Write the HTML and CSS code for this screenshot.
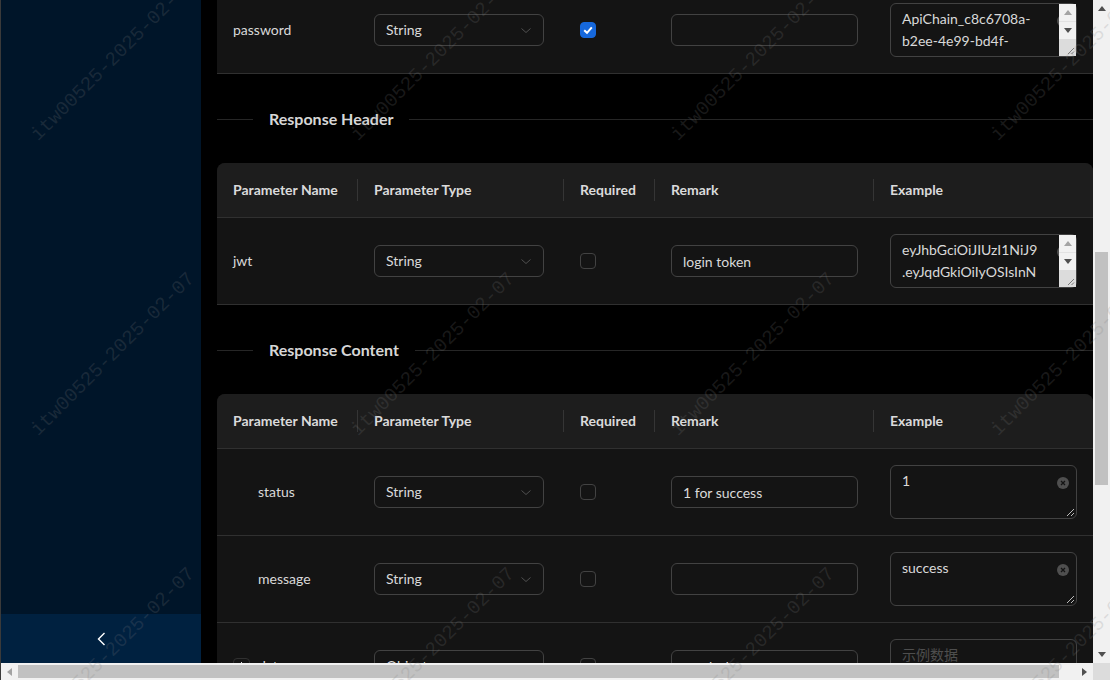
FILE: index.html
```html
<!DOCTYPE html>
<html lang="en">
<head>
<meta charset="utf-8">
<title>API Document</title>
<link rel="stylesheet" href="styles.css">
</head>
<body>
<div class="window">
  <div class="viewport">
    <aside class="sider">
      <div class="sider-menu"></div>
      <div class="sider-trigger">
        <svg width="10" height="14" viewBox="0 0 10 14"><path d="M8.5 1 L2.5 7 L8.5 13" fill="none" stroke="#fff" stroke-width="1.4"/></svg>
      </div>
    </aside>
    <main class="content">
      <div class="scroller">
        <section class="table-card">
          <div class="trow">
            <div class="td">password</div>
            <div class="td"><div class="select"><span>String</span><svg class="arrow" width="12" height="12" viewBox="0 0 12 12"><path d="M1.5 4.5 L6 8.5 L10.5 4.5" fill="none" stroke="currentColor" stroke-width="1"/></svg></div></div>
            <div class="td"><span class="checkbox checked"><svg width="12" height="12" viewBox="0 0 12 12"><path d="M2.2 6.2 L5 8.8 L9.8 3.4" fill="none" stroke="#fff" stroke-width="2"/></svg></span></div>
            <div class="td"><input class="input" type="text" value=""></div>
            <div class="td"><span class="ta-wrap"><span class="ta-clear"><svg width="12" height="12" viewBox="0 0 12 12"><circle cx="6" cy="6" r="6" fill="rgba(255,255,255,0.25)"/><path d="M4 4 L8 8 M8 4 L4 8" stroke="#141414" stroke-width="1.3"/></svg></span><textarea class="ta ta-scroll">ApiChain_c8c6708a-b2ee-4e99-bd4f-5e3a1c9d7f20</textarea><span class="ta-bar" aria-hidden="true"><span class="ta-bar-btn"><svg width="8" height="5" viewBox="0 0 8 5"><path d="M0 5 H8 L4 0 Z" fill="#a3a3a3"/></svg></span><span class="ta-bar-track"></span><span class="ta-bar-btn"><svg width="8" height="5" viewBox="0 0 8 5"><path d="M0 0 H8 L4 5 Z" fill="#505050"/></svg></span><span class="ta-bar-corner"><svg width="17" height="17" viewBox="0 0 17 17"><path d="M15 9 L9 15 M15 12.5 L12.5 15" stroke="#7a7a7a" stroke-width="1"/></svg></span></span></span></div>
          </div>
        </section>

        <div class="divider"><span class="divider-text">Response Header</span></div>

        <section class="table-card">
          <div class="thead">
            <div class="th">Parameter Name</div>
            <div class="th">Parameter Type</div>
            <div class="th">Required</div>
            <div class="th">Remark</div>
            <div class="th">Example</div>
          </div>
          <div class="trow">
            <div class="td">jwt</div>
            <div class="td"><div class="select"><span>String</span><svg class="arrow" width="12" height="12" viewBox="0 0 12 12"><path d="M1.5 4.5 L6 8.5 L10.5 4.5" fill="none" stroke="currentColor" stroke-width="1"/></svg></div></div>
            <div class="td"><span class="checkbox"></span></div>
            <div class="td"><input class="input" type="text" value="login token"></div>
            <div class="td"><span class="ta-wrap"><span class="ta-clear"><svg width="12" height="12" viewBox="0 0 12 12"><circle cx="6" cy="6" r="6" fill="rgba(255,255,255,0.25)"/><path d="M4 4 L8 8 M8 4 L4 8" stroke="#141414" stroke-width="1.3"/></svg></span><textarea class="ta ta-scroll">eyJhbGciOiJIUzI1NiJ9.eyJqdGkiOiIyOSIsInN1YiI6ImFkbWluIiwiaWF0IjoxNzM4ODk2MDAwfQ.x7QmZ2h4pLkR9sVtYbNwA3cE8fGjU1oI6dHqT0rMeKs</textarea><span class="ta-bar" aria-hidden="true"><span class="ta-bar-btn"><svg width="8" height="5" viewBox="0 0 8 5"><path d="M0 5 H8 L4 0 Z" fill="#a3a3a3"/></svg></span><span class="ta-bar-track"></span><span class="ta-bar-btn"><svg width="8" height="5" viewBox="0 0 8 5"><path d="M0 0 H8 L4 5 Z" fill="#505050"/></svg></span><span class="ta-bar-corner"><svg width="17" height="17" viewBox="0 0 17 17"><path d="M15 9 L9 15 M15 12.5 L12.5 15" stroke="#7a7a7a" stroke-width="1"/></svg></span></span></span></div>
          </div>
        </section>

        <div class="divider"><span class="divider-text">Response Content</span></div>

        <section class="table-card">
          <div class="thead">
            <div class="th">Parameter Name</div>
            <div class="th">Parameter Type</div>
            <div class="th">Required</div>
            <div class="th">Remark</div>
            <div class="th">Example</div>
          </div>
          <div class="trow">
            <div class="td"><span class="indent"></span>status</div>
            <div class="td"><div class="select"><span>String</span><svg class="arrow" width="12" height="12" viewBox="0 0 12 12"><path d="M1.5 4.5 L6 8.5 L10.5 4.5" fill="none" stroke="currentColor" stroke-width="1"/></svg></div></div>
            <div class="td"><span class="checkbox"></span></div>
            <div class="td"><input class="input" type="text" value="1 for success"></div>
            <div class="td"><span class="ta-wrap"><span class="ta-clear"><svg width="12" height="12" viewBox="0 0 12 12"><circle cx="6" cy="6" r="6" fill="rgba(255,255,255,0.25)"/><path d="M4 4 L8 8 M8 4 L4 8" stroke="#141414" stroke-width="1.3"/></svg></span><textarea class="ta">1</textarea></span></div>
          </div>
          <div class="trow">
            <div class="td"><span class="indent"></span>message</div>
            <div class="td"><div class="select"><span>String</span><svg class="arrow" width="12" height="12" viewBox="0 0 12 12"><path d="M1.5 4.5 L6 8.5 L10.5 4.5" fill="none" stroke="currentColor" stroke-width="1"/></svg></div></div>
            <div class="td"><span class="checkbox"></span></div>
            <div class="td"><input class="input" type="text" value=""></div>
            <div class="td"><span class="ta-wrap"><span class="ta-clear"><svg width="12" height="12" viewBox="0 0 12 12"><circle cx="6" cy="6" r="6" fill="rgba(255,255,255,0.25)"/><path d="M4 4 L8 8 M8 4 L4 8" stroke="#141414" stroke-width="1.3"/></svg></span><textarea class="ta">success</textarea></span></div>
          </div>
          <div class="trow">
            <div class="td"><button class="expand" type="button" aria-label="expand"></button>data</div>
            <div class="td"><div class="select"><span>Object</span><svg class="arrow" width="12" height="12" viewBox="0 0 12 12"><path d="M1.5 4.5 L6 8.5 L10.5 4.5" fill="none" stroke="currentColor" stroke-width="1"/></svg></div></div>
            <div class="td"><span class="checkbox"></span></div>
            <div class="td"><input class="input" type="text" value="result data"></div>
            <div class="td"><span class="ta-wrap"><textarea class="ta" placeholder="示例数据"></textarea></span></div>
          </div>
        </section>
      </div>
    </main>
  </div>

  <div class="vscroll">
    <div class="sb-btn"><svg width="8" height="5" viewBox="0 0 8 5"><path d="M0 5 H8 L4 0 Z" fill="#505050"/></svg></div>
    <div class="vtrack"><div class="vthumb"></div></div>
    <div class="sb-btn"><svg width="8" height="5" viewBox="0 0 8 5"><path d="M0 0 H8 L4 5 Z" fill="#505050"/></svg></div>
  </div>
  <div class="hscroll">
    <div class="sb-btn"><svg width="5" height="8" viewBox="0 0 5 8"><path d="M5 0 V8 L0 4 Z" fill="#a3a3a3"/></svg></div>
    <div class="htrack"><div class="hthumb"></div></div>
    <div class="sb-btn"><svg width="5" height="8" viewBox="0 0 5 8"><path d="M0 0 V8 L5 4 Z" fill="#505050"/></svg></div>
  </div>
  <div class="corner"></div>

  <div class="watermark" aria-hidden="true">
    <div class="wm"><span>itw00525-2025-02-07</span></div>
    <div class="wm"><span>itw00525-2025-02-07</span></div>
    <div class="wm"><span>itw00525-2025-02-07</span></div>
    <div class="wm"><span>itw00525-2025-02-07</span></div>
    <div class="wm"><span>itw00525-2025-02-07</span></div>
    <div class="wm"><span>itw00525-2025-02-07</span></div>
    <div class="wm"><span>itw00525-2025-02-07</span></div>
    <div class="wm"><span>itw00525-2025-02-07</span></div>
    <div class="wm"><span>itw00525-2025-02-07</span></div>
    <div class="wm"><span>itw00525-2025-02-07</span></div>
    <div class="wm"><span>itw00525-2025-02-07</span></div>
    <div class="wm"><span>itw00525-2025-02-07</span></div>
  </div>
</div>
</body>
</html>
```

FILE: styles.css
```css
* { box-sizing: border-box; }
html, body { margin: 0; padding: 0; background: #000; }
body {
  font-family: Lato, "Noto Sans CJK SC", sans-serif;
  font-size: 14px;
  line-height: 22px;
  color: rgba(255, 255, 255, 0.85);
  overflow: hidden;
}

.window {
  position: relative;
  width: 1110px;
  height: 680px;
  overflow: hidden;
  display: grid;
  grid-template-columns: 1092px 17px;
  grid-template-rows: 663px 17px;
  border-left: 1px solid #3a3a3a;
}

.viewport { display: flex; min-width: 0; overflow: hidden; }

.sider {
  width: 200px;
  flex: none;
  background: #001529;
  display: flex;
  flex-direction: column;
}
.sider-menu { flex: 1; }
.sider-trigger {
  height: 49px;
  background: #002140;
  display: flex;
  align-items: center;
  justify-content: center;
}

.content {
  flex: 1;
  min-width: 0;
  background: #000;
  padding-left: 16px;
  overflow: hidden;
}
.scroller { margin-top: -13px; }

.table-card { background: #141414; border-radius: 8px 8px 0 0; }
.thead, .trow {
  display: grid;
  grid-template-columns: 141px 206px 91px 219px 219px;
}
.thead {
  background: #1d1d1d;
  border-radius: 8px 8px 0 0;
  border-bottom: 1px solid #303030;
}
.th {
  position: relative;
  padding: 16px;
  font-weight: 700;
  line-height: 22px;
  white-space: nowrap;
}
.th:not(:last-child)::before {
  content: "";
  position: absolute;
  right: 0;
  top: 16px;
  width: 1px;
  height: 22px;
  background: #353535;
}
.trow { border-bottom: 1px solid #303030; }
.td {
  padding: 16px;
  display: flex;
  align-items: center;
  min-width: 0;
}

.indent { display: inline-block; width: 17px; height: 17px; margin-right: 8px; flex: none; }
.expand {
  flex: none;
  width: 17px;
  height: 17px;
  margin: 0 8px 0 0;
  padding: 0;
  border: 1px solid #303030;
  border-radius: 4px;
  background: #141414;
  position: relative;
}
.expand::before, .expand::after {
  content: "";
  position: absolute;
  background: rgba(255, 255, 255, 0.85);
}
.expand::before { left: 3px; right: 3px; top: 7px; height: 1px; }
.expand::after { top: 3px; bottom: 3px; left: 7px; width: 1px; }

.select {
  width: 170px;
  height: 32px;
  border: 1px solid #424242;
  border-radius: 6px;
  padding: 0 11px;
  display: flex;
  align-items: center;
  justify-content: space-between;
}
.select .arrow { color: rgba(255, 255, 255, 0.25); }

.checkbox {
  width: 16px;
  height: 16px;
  border: 1px solid #424242;
  border-radius: 4px;
  display: flex;
  align-items: center;
  justify-content: center;
}
.checkbox.checked { background: #1668dc; border-color: #1668dc; }

.input {
  width: 100%;
  height: 32px;
  border: 1px solid #424242;
  border-radius: 6px;
  padding: 4px 11px;
  background: transparent;
  color: rgba(255, 255, 255, 0.85);
  font: 14px/22px Lato, "Noto Sans CJK SC", sans-serif;
  outline: none;
}

.ta-wrap { position: relative; display: block; width: 100%; height: 54px; }
.ta-clear {
  position: absolute;
  top: 12px;
  right: 8px;
  width: 12px;
  height: 12px;
  display: block;
}
.ta-clear svg { display: block; }
.ta {
  position: relative;
  display: block;
  width: 100%;
  height: 54px;
  margin: 0;
  border: 1px solid #424242;
  border-radius: 6px;
  padding: 4px 24px 4px 11px;
  background: transparent;
  color: rgba(255, 255, 255, 0.85);
  font: 14px/22px Lato, "Noto Sans CJK SC", sans-serif;
  resize: vertical;
  outline: none;
  overflow: hidden;
}
.ta::placeholder { color: rgba(255, 255, 255, 0.25); }
.ta::-webkit-resizer {
  background: transparent url("data:image/svg+xml,%3Csvg xmlns='http://www.w3.org/2000/svg' width='17' height='17'%3E%3Cpath d='M15 8 L8 15 M15 12 L12 15' stroke='%23bbbbbb' stroke-width='1'/%3E%3C/svg%3E") no-repeat right bottom;
}
.ta-scroll { padding-right: 37px; resize: none; }

.ta-bar {
  position: absolute;
  top: 1px;
  right: 1px;
  bottom: 1px;
  width: 17px;
  display: flex;
  flex-direction: column;
  background: #f1f1f1;
}
.ta-bar-btn {
  flex: none;
  height: 17px;
  display: flex;
  align-items: center;
  justify-content: center;
}
.ta-bar-btn svg, .ta-bar-corner svg { display: block; }
.ta-bar-track { flex: 1; background: #e2e2e2; }
.ta-bar-corner { flex: none; height: 17px; background: #dcdcdc; }

.divider {
  display: flex;
  align-items: center;
  height: 42px;
  margin: 24px 0 23px;
  font-size: 16px;
  font-weight: 700;
}
.divider::before {
  content: "";
  width: 36px;
  border-top: 1px solid #262626;
}
.divider::after {
  content: "";
  flex: 1;
  border-top: 1px solid #262626;
}
.divider-text { padding: 0 16px; line-height: 24px; }

.vscroll {
  background: #f1f1f1;
  display: flex;
  flex-direction: column;
}
.sb-btn {
  flex: none;
  width: 17px;
  height: 17px;
  display: flex;
  align-items: center;
  justify-content: center;
}
.vtrack { flex: 1; padding: 0 2px; }
.vthumb { margin-top: 235px; height: 233px; background: #c1c1c1; }
.hscroll { display: flex; background: #f1f1f1; }
.htrack { flex: 1; padding: 2px 0; }
.hthumb { width: 1041px; height: 13px; background: #c1c1c1; }
.corner { background: #dcdcdc; }

.watermark {
  position: absolute;
  left: 41px;
  top: -150px;
  display: grid;
  grid-template-columns: repeat(4, 320px);
  grid-template-rows: repeat(3, 295px);
  pointer-events: none;
  z-index: 10;
}
.wm { position: relative; }
.wm span {
  position: absolute;
  left: 0;
  bottom: 0;
  transform-origin: 0 100%;
  transform: rotate(-45deg);
  white-space: nowrap;
  font: 19.5px/19.5px "Liberation Mono", monospace;
  color: rgba(128, 128, 128, 0.2);
}
```
